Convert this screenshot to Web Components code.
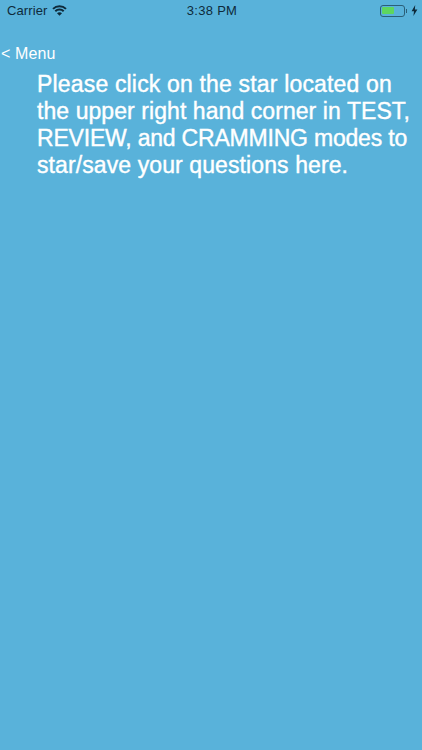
<!DOCTYPE html>
<html>
<head>
<meta charset="utf-8">
<title>Starred</title>
<style>
html, body { margin: 0; height: 100%; background: #59b2da; }
body { font-family: "Liberation Sans", Arial, sans-serif; overflow: hidden; }
</style>
</head>
<body>
<status-bar></status-bar>
<back-link>&lt; Menu</back-link>
<info-text>
    <div style="letter-spacing:.17px">Please click on the star located on</div>
    <div style="letter-spacing:.07px">the upper right hand corner in TEST,</div>
    <div style="letter-spacing:-.2px">REVIEW, and CRAMMING modes to</div>
    <div style="letter-spacing:.1px">star/save your questions here.</div>
</info-text>

<script>
// ── Status bar ──────────────────────────────────────────
class StatusBar extends HTMLElement {
    connectedCallback() {
        this.attachShadow({ mode: 'open' }).innerHTML = `
<style>
:host {
    display: grid; grid-template-columns: 1fr auto 1fr; align-items: center;
    height: 21px; padding: 0 7px; color: #0e2a3a;
    font: 13px/21px "Liberation Sans", Arial, sans-serif;
}
.left { display: flex; align-items: center; gap: 5px; }
.left span { letter-spacing: .1px; }
.time { font-size: 13px; letter-spacing: .3px; padding-left: 2px; }
.right { display: flex; align-items: center; justify-content: flex-end; gap: 2px; margin-right: -3px; }
svg { display: block; }
.batt {
    box-sizing: border-box; width: 25px; height: 12px; padding: 1.5px;
    border: 1px solid #2b5f78; border-radius: 3px;
}
.batt i { display: block; width: 60%; height: 100%; background: #5ed65e; border-radius: 1px; }
.nub { width: 1.5px; height: 4px; background: #2b5f78; margin-left: -1px; }
</style>
<div class="left">
    <span>Carrier</span>
    <svg width="15" height="11" viewBox="0 0 15 11" fill="none" stroke="#0e2a3a" stroke-width="2">
        <path d="M1 3.9C4.6.4 10.4.4 14 3.9"/>
        <path d="M3.3 6.2C5.6 4 9.4 4 11.7 6.2"/>
        <path d="M7.5 10.8 5 8.2C6.4 7 8.6 7 10 8.2Z" fill="#0e2a3a" stroke="none"/>
    </svg>
</div>
<span class="time">3:38 PM</span>
<div class="right">
    <div class="batt"><i></i></div>
    <div class="nub"></div>
    <svg width="7" height="11" viewBox="0 0 7 11" style="margin-left:2px"><path d="M4.2 0 .6 6.2h2.4L2.4 11 6.4 4.4H3.9Z" fill="#0e2a3a"/></svg>
</div>`;
    }
}
customElements.define('status-bar', StatusBar);

// ── Back link ───────────────────────────────────────────
class BackLink extends HTMLElement {
    connectedCallback() {
        this.attachShadow({ mode: 'open' }).innerHTML = `
<style>
:host {
    display: block; padding: 23px 0 0 1px; color: #fff;
    font: 16px/19px "Liberation Sans", Arial, sans-serif;
    letter-spacing: .1px;
}
</style>
<slot></slot>`;
    }
}
customElements.define('back-link', BackLink);

// ── Message ─────────────────────────────────────────────
class InfoText extends HTMLElement {
    connectedCallback() {
        this.attachShadow({ mode: 'open' }).innerHTML = `
<style>
:host {
    display: block; padding: 8px 0 0 37px; color: #fff;
    font: 23px/27px "Liberation Sans", Arial, sans-serif;
    white-space: nowrap;
    -webkit-text-stroke: .4px #fff;
}
</style>
<slot></slot>`;
    }
}
customElements.define('info-text', InfoText);
</script>
</body>
</html>
